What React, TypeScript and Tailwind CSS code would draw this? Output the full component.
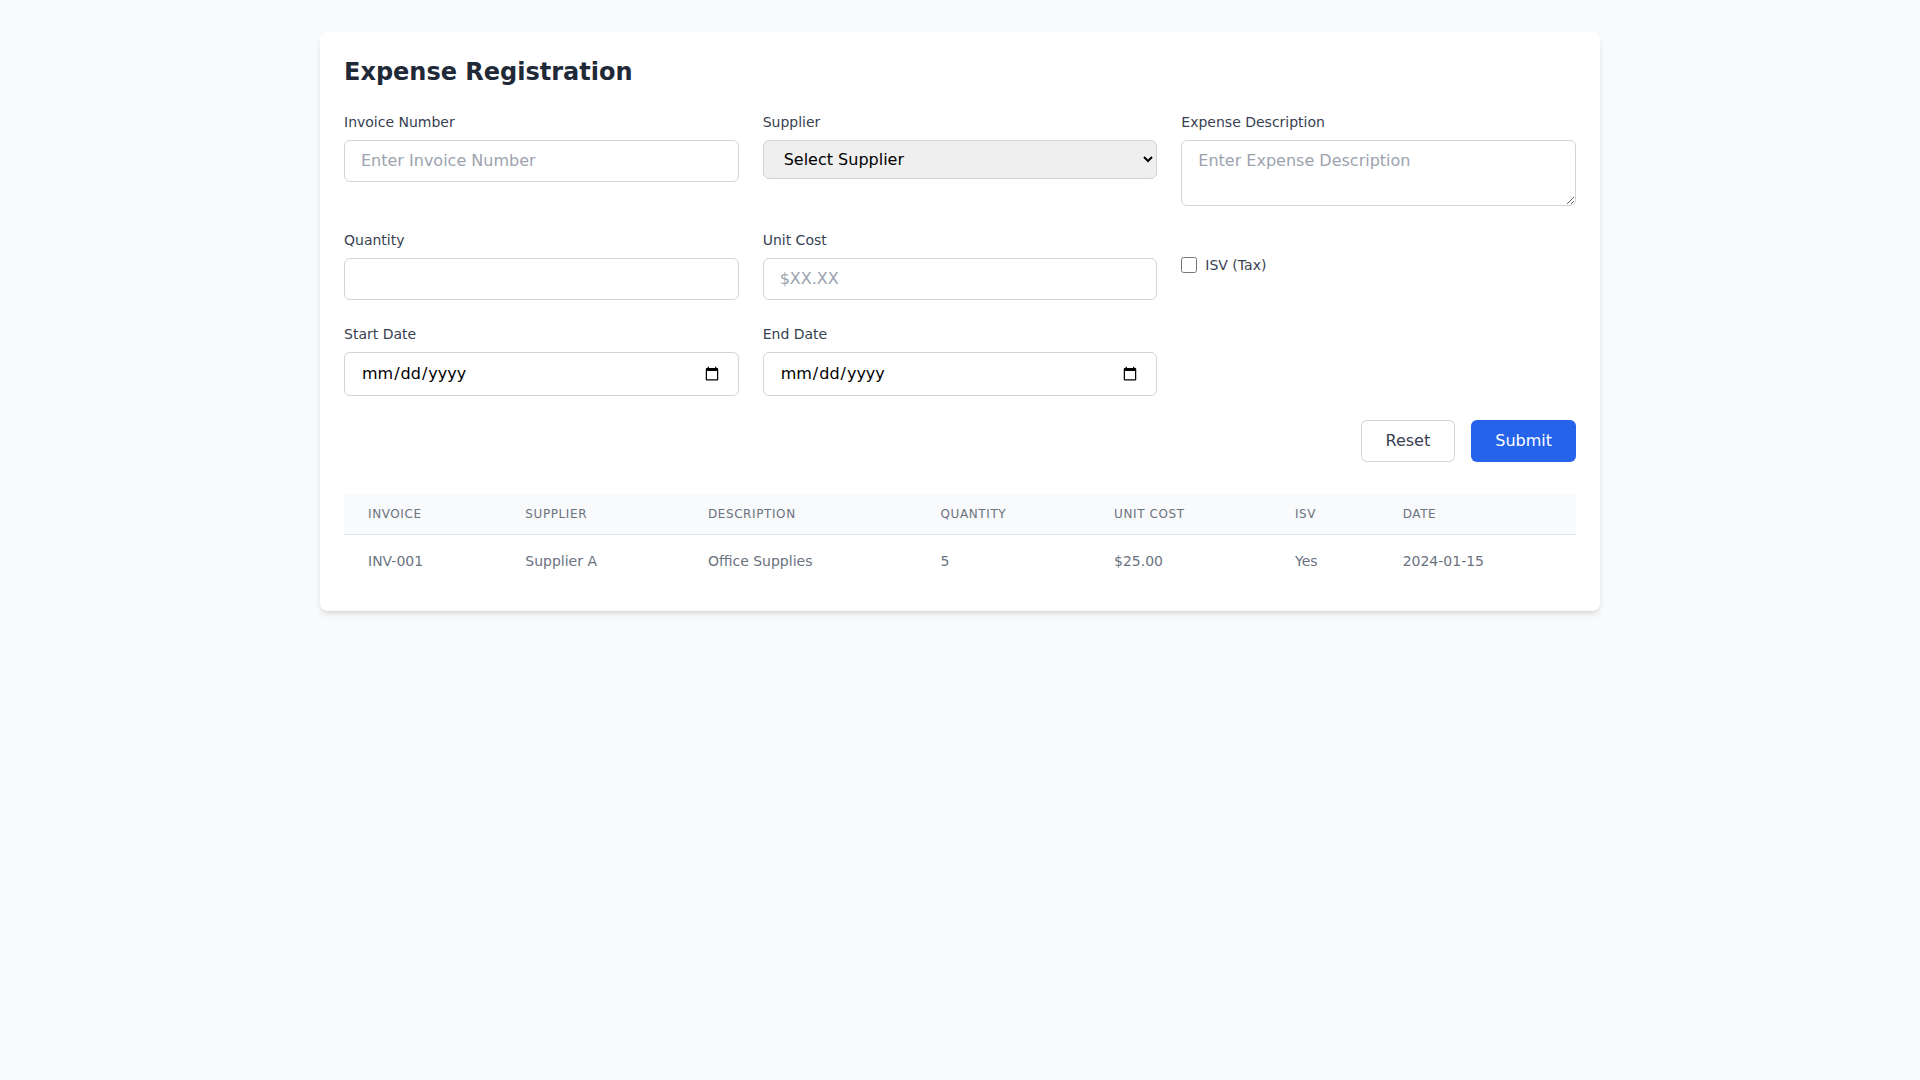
import React from "react";

export default function App() {
  return (
    <div className="min-h-screen bg-[#f9fafb] py-8 font-['DejaVu_Sans',sans-serif]">
      <div className="max-w-7xl mx-auto bg-white rounded-lg shadow-md p-6">
        <h1 className="text-2xl font-bold text-[#1f2937] mb-6">Expense Registration</h1>
        <form onSubmit={(e) => e.preventDefault()}>
          <div className="grid grid-cols-3 gap-6">
            <div>
              <label className="block text-sm text-[#374151] mb-2">Invoice Number</label>
              <input
                type="text"
                placeholder="Enter Invoice Number"
                className="w-full px-4 py-2 border border-[#d1d5db] rounded-md placeholder-[#9ca3af]"
              />
            </div>
            <div>
              <label className="block text-sm text-[#374151] mb-2">Supplier</label>
              <select className="w-full px-4 py-2 border border-[#d1d5db] rounded-md bg-[#efefef] text-black">
                <option>Select Supplier</option>
                <option>Supplier A</option>
                <option>Supplier B</option>
              </select>
            </div>
            <div>
              <label className="block text-sm text-[#374151] mb-2">Expense Description</label>
              <textarea
                rows={2}
                placeholder="Enter Expense Description"
                className="block w-full px-4 py-2 border border-[#d1d5db] rounded-md placeholder-[#9ca3af]"
              />
            </div>

            <div>
              <label className="block text-sm text-[#374151] mb-2">Quantity</label>
              <input type="number" className="w-full px-4 py-2 border border-[#d1d5db] rounded-md" />
            </div>
            <div>
              <label className="block text-sm text-[#374151] mb-2">Unit Cost</label>
              <input
                type="text"
                placeholder="$XX.XX"
                className="w-full px-4 py-2 border border-[#d1d5db] rounded-md placeholder-[#9ca3af]"
              />
            </div>
            <div className="flex items-center">
              <input type="checkbox" id="isv" className="h-4 w-4" />
              <label htmlFor="isv" className="ml-2 text-sm text-[#374151]">
                ISV (Tax)
              </label>
            </div>

            <div>
              <label className="block text-sm text-[#374151] mb-2">Start Date</label>
              <input type="date" className="w-full h-[44px] px-4 py-2 border border-[#d1d5db] rounded-md" />
            </div>
            <div>
              <label className="block text-sm text-[#374151] mb-2">End Date</label>
              <input type="date" className="w-full h-[44px] px-4 py-2 border border-[#d1d5db] rounded-md" />
            </div>
          </div>

          <div className="mt-6 flex justify-end gap-4">
            <button
              type="reset"
              className="px-6 py-2 border border-[#d1d5db] rounded-md text-[#374151] bg-white"
            >
              Reset
            </button>
            <button type="submit" className="px-6 py-2 rounded-md text-white bg-[#2563eb]">
              Submit
            </button>
          </div>
        </form>

        <div className="mt-8 overflow-x-auto">
          <table className="min-w-full divide-y divide-[#e5e7eb]">
            <thead className="bg-[#f9fafb]">
              <tr>
                {["Invoice", "Supplier", "Description", "Quantity", "Unit Cost", "ISV", "Date"].map((h) => (
                  <th
                    key={h}
                    className="px-6 py-3 text-left text-xs font-medium text-[#6b7280] uppercase tracking-wider"
                  >
                    {h}
                  </th>
                ))}
              </tr>
            </thead>
            <tbody className="bg-white divide-y divide-[#e5e7eb]">
              <tr>
                {["INV-001", "Supplier A", "Office Supplies", "5", "$25.00", "Yes", "2024-01-15"].map((c, i) => (
                  <td key={i} className="px-6 py-4 whitespace-nowrap text-sm text-[#6b7280]">
                    {c}
                  </td>
                ))}
              </tr>
            </tbody>
          </table>
        </div>
      </div>
    </div>
  );
}
